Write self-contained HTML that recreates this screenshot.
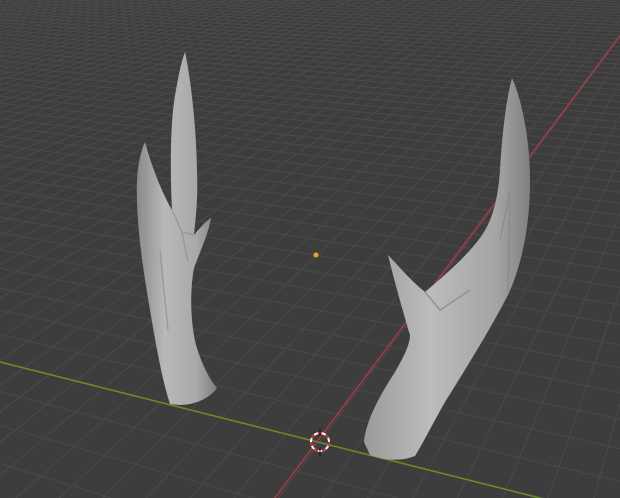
<!DOCTYPE html>
<html><head><style>html,body{margin:0;padding:0;background:#3d3d3d;overflow:hidden;width:620px;height:498px}svg{display:block;position:absolute;left:0;top:0}</style></head>
<body>
<svg id="s" width="620" height="498" viewBox="0 0 620 498" xmlns="http://www.w3.org/2000/svg">
<defs>
<linearGradient id="gl" x1="0" y1="0" x2="1" y2="0">
<stop offset="0" stop-color="#8a8a8a"/><stop offset="0.35" stop-color="#b8b8b8"/><stop offset="0.75" stop-color="#a8a8a8"/><stop offset="1" stop-color="#7d7d7d"/></linearGradient>
<linearGradient id="gr" x1="0" y1="0" x2="1" y2="0">
<stop offset="0" stop-color="#9a9a9a"/><stop offset="0.4" stop-color="#bcbcbc"/><stop offset="0.8" stop-color="#a4a4a4"/><stop offset="1" stop-color="#808080"/></linearGradient>
</defs>
<rect width="620" height="498" fill="#3d3d3d"/>
<g id="grid" stroke="#4a4a4a" stroke-width="1" fill="none"></g>
<line x1="-200" y1="311.6" x2="700" y2="538.4" stroke="#6b8e23" stroke-width="1.5"/>
<line x1="648" y1="-2" x2="266" y2="510" stroke="#a33a48" stroke-width="1.5"/>
<path fill="url(#gl)" d="M170,404 C162,380 155,340 150,310 C145,280 138,240 137,200 C136,175 139,155 145,142 C150,160 158,185 172,210 C170,170 170,120 176,90 C179,72 182,60 185,52 C190,75 196,120 197,170 C198,200 196,215 194,235 C200,228 205,222 211,218 C209,232 200,252 194,268 C190,290 190,320 196,345 C202,365 210,380 217,388 C210,398 195,405 180,405 Z"/>
<path d="M172,210 L182,232 L194,235 M182,232 L188,262 M160,250 L168,330" stroke="#909090" stroke-width="1.5" fill="none" opacity="0.7"/>
<path fill="url(#gr)" d="M364,442 C366,420 380,395 395,372 C403,358 410,345 410,335 C404,315 394,280 388,255 C395,262 410,280 425,292 C445,275 465,258 480,238 C492,222 498,200 500,170 C502,135 506,100 512,78 C522,100 530,140 530,180 C530,225 522,265 508,295 C490,330 465,370 445,402 C432,425 422,445 415,456 C400,462 382,460 370,455 Z"/>
<path d="M425,292 L440,310 L470,290 M508,295 L510,190 L500,240" stroke="#8a8a8a" stroke-width="1.5" fill="none" opacity="0.8"/>
<circle cx="316" cy="255" r="2.5" fill="#f5a020"/>
<circle cx="320" cy="442" r="9" fill="none" stroke="#fff" stroke-width="2"/>
<circle cx="320" cy="442" r="9" fill="none" stroke="#d0202a" stroke-width="2" stroke-dasharray="4 4"/>
<line x1="320" y1="428" x2="320" y2="436" stroke="#111" stroke-width="1"/>
<line x1="320" y1="448" x2="320" y2="456" stroke="#111" stroke-width="1"/>
</svg>
<script>
(function(){
var O=[320,442,1],V1=[-1824,-98,1],V2=[784,-185,1],a=0.016,b=0.045;
function P(u,v){var x=O[0]+u*a*V1[0]+v*b*V2[0],y=O[1]+u*a*V1[1]+v*b*V2[1],w=1+u*a+v*b;return [x/w,y/w,w];}
var g=document.getElementById('grid'),h='';
for(var v=-40;v<=200;v++){var u1=(0.03-1-b*v)/a;var p=P(u1,v),q=P(3000,v);h+='<line x1="'+p[0].toFixed(1)+'" y1="'+p[1].toFixed(1)+'" x2="'+q[0].toFixed(1)+'" y2="'+q[1].toFixed(1)+'"/>';}
for(var u=-80;u<=400;u++){var v1=(0.03-1-a*u)/b;var p=P(u,v1),q=P(u,3000);h+='<line x1="'+p[0].toFixed(1)+'" y1="'+p[1].toFixed(1)+'" x2="'+q[0].toFixed(1)+'" y2="'+q[1].toFixed(1)+'"/>';}
g.innerHTML=h;
})();
</script>
</body></html>
